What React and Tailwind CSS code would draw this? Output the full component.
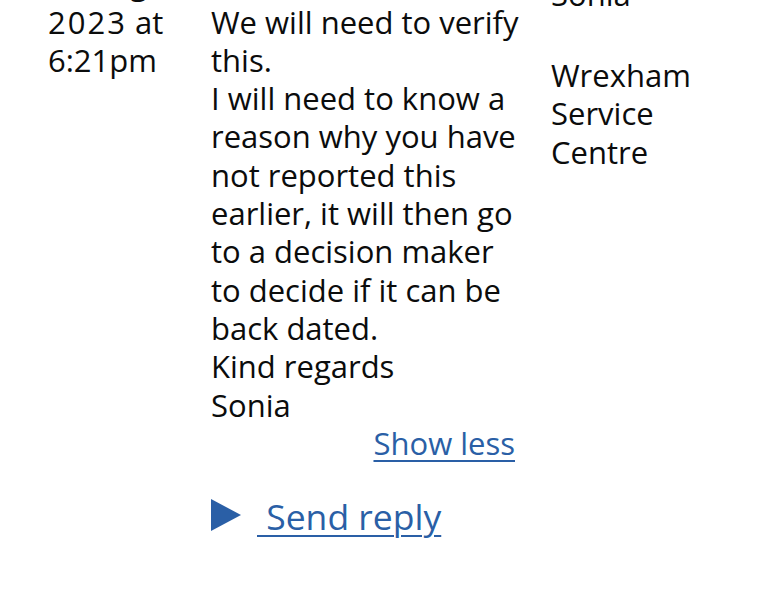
import React from 'react';

const lines = [
  'We will need to verify',
  'this.',
  'I will need to know a',
  'reason why you have',
  'not reported this',
  'earlier, it will then go',
  'to a decision maker',
  'to decide if it can be',
  'back dated.',
  'Kind regards',
  'Sonia',
];

function Triangle() {
  return (
    <svg width="30" height="32" viewBox="0 0 30 32" className="mt-[5px] shrink-0">
      <polygon points="0,0 30,16 0,32" fill="#2a5fa6" />
    </svg>
  );
}

export default function App() {
  return (
    <div
      className="h-[600px] overflow-hidden bg-white text-[#0b0c0c]"
      style={{ fontFamily: '"Open Sans", "Noto Sans", sans-serif' }}
    >
      <div className="-mt-[74px] grid grid-cols-[163px_340px_1fr] pl-[48px] text-[31px] leading-[38.3px]">
        <div className="flex flex-col">
          <span>Sent on</span>
          <span className="whitespace-nowrap">17 August</span>
          <span><span className="tracking-[2px]">2023</span> at</span>
          <span>6:21pm</span>
        </div>
        <div className="flex flex-col pr-[36px]">
          <span className="mb-[38.3px]">Hello</span>
          {lines.map((l) => (
            <span key={l} className="whitespace-nowrap">{l}</span>
          ))}
          <a href="#" className="self-end text-[#2a5fa6] underline decoration-2 underline-offset-[5px]">
            Show less
          </a>
          <div className="mt-[32px] flex items-start">
            <Triangle />
            <a href="#" className="whitespace-pre text-[35.5px] leading-[44px] text-[#2a5fa6] underline decoration-2 underline-offset-[5px] ml-[16px]">
              {' Send reply'}
            </a>
          </div>
        </div>
        <div className="flex flex-col">
          <span className="mt-[49px]">Sonia</span>
          <span className="mt-[42.7px]">Wrexham</span>
          <span>Service</span>
          <span>Centre</span>
        </div>
      </div>
    </div>
  );
}
